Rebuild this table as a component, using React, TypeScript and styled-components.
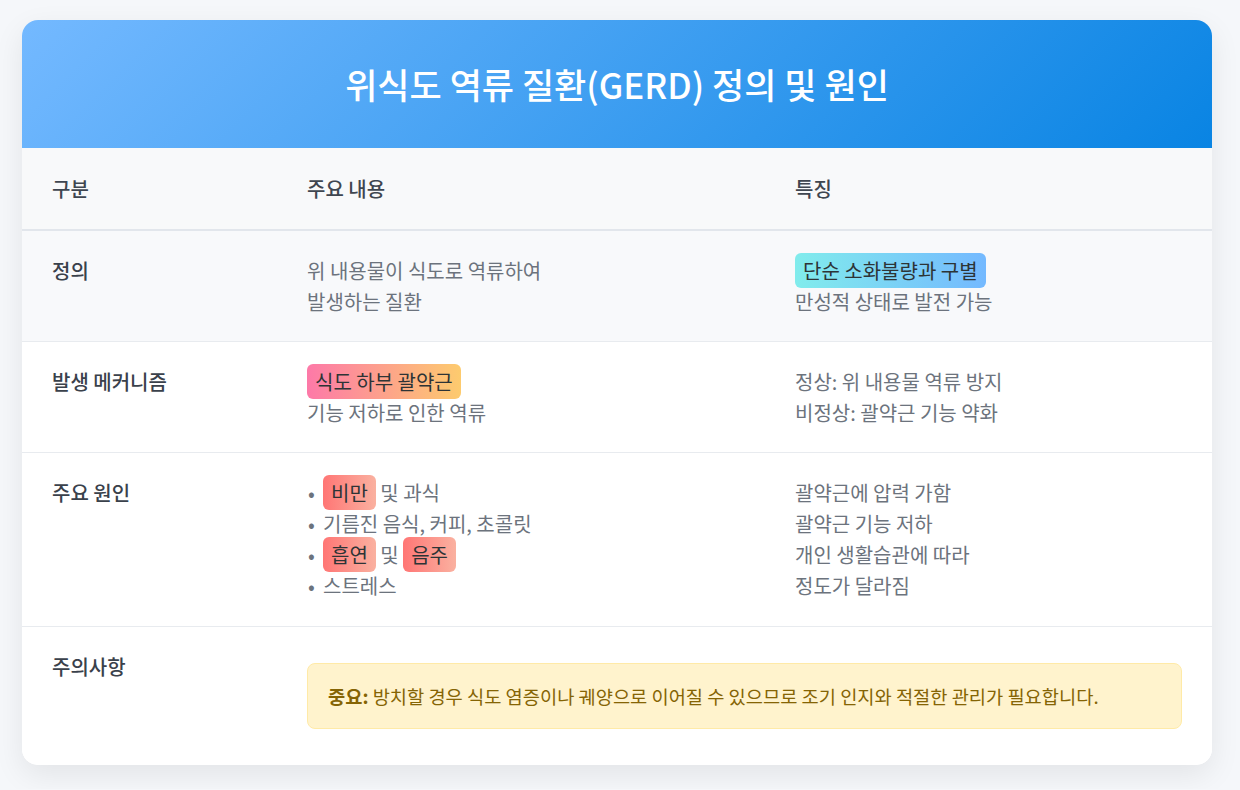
import * as React from 'react';
import styled, { createGlobalStyle } from 'styled-components';

const GlobalStyle = createGlobalStyle`
  * { box-sizing: border-box; }
  body {
    margin: 0;
    padding: 20px 28px 24px 22px;
    background: #f5f7fa;
    font-family: "Noto Sans CJK KR", "Noto Sans", sans-serif;
  }
`;

const Card = styled.div`
  background: #ffffff;
  border-radius: 16px;
  overflow: hidden;
  box-shadow: 0 10px 30px rgba(0, 0, 0, 0.08);
`;

const Header = styled.div`
  background: linear-gradient(135deg, #74b9ff 0%, #0984e3 100%);
  height: 128px;
  display: flex;
  align-items: center;
  justify-content: center;
`;

const Title = styled.h1`
  margin: 0;
  color: #ffffff;
  font-size: 35px;
  font-weight: 500;
  line-height: 1.2;
`;

const Table = styled.table`
  width: 100%;
  border-collapse: collapse;
  table-layout: fixed;
`;

const HeadCell = styled.th`
  text-align: left;
  padding: 25px 30px;
  background: #f8f9fa;
  border-bottom: 2px solid #e2e6ec;
  color: #3f4650;
  font-size: 20px;
  font-weight: 500;
  line-height: 31px;
`;

const Row = styled.tr<{ $shaded?: boolean }>`
  background: ${(p) => (p.$shaded ? '#f8f9fb' : '#ffffff')};
  border-bottom: 1px solid #e8ebef;
  &:last-child { border-bottom: none; }
`;

const LabelCell = styled.td`
  vertical-align: top;
  padding: 24px 30px;
  color: #3a414b;
  font-size: 20px;
  font-weight: 500;
  line-height: 31px;
`;

const Cell = styled.td`
  vertical-align: top;
  padding: 24px 30px;
  color: #6c737d;
  font-size: 20px;
  line-height: 31px;
`;

const Pill = styled.span<{ $tone: 'blue' | 'sunset' | 'coral' }>`
  padding: 3px 8px;
  border-radius: 6px;
  color: #2d3436;
  background: ${(p) =>
    p.$tone === 'blue'
      ? 'linear-gradient(90deg, #81ecec, #74b9ff)'
      : p.$tone === 'sunset'
      ? 'linear-gradient(90deg, #fd79a8, #fdcb6e)'
      : 'linear-gradient(90deg, #ff7675, #fab1a0)'};
`;

const List = styled.ul`
  list-style: none;
  margin: 0;
  padding: 0 0 1px;
`;

const Item = styled.li`
  &::before {
    content: '•';
    display: inline-block;
    width: 15px;
    padding-left: 1px;
    color: #6c737d;
  }
`;

const Notice = styled.div`
  margin: 12px 0;
  padding: 16px 20px;
  background: #fff3cd;
  border: 1px solid #ffeaa7;
  border-radius: 8px;
  color: #856404;
  font-size: 18.7px;
  line-height: 32px;
  strong { font-weight: 700; }
`;

export default function App() {
  return (
    <>
      <GlobalStyle />
      <Card>
        <Header>
          <Title>위식도 역류 질환(GERD) 정의 및 원인</Title>
        </Header>
        <Table>
          <colgroup>
            <col style={{ width: 255 }} />
            <col style={{ width: 488 }} />
            <col />
          </colgroup>
          <thead>
            <tr>
              <HeadCell>구분</HeadCell>
              <HeadCell>주요 내용</HeadCell>
              <HeadCell>특징</HeadCell>
            </tr>
          </thead>
          <tbody>
            <Row $shaded>
              <LabelCell>정의</LabelCell>
              <Cell>
                위 내용물이 식도로 역류하여
                <br />
                발생하는 질환
              </Cell>
              <Cell>
                <Pill $tone="blue">단순 소화불량과 구별</Pill>
                <br />
                만성적 상태로 발전 가능
              </Cell>
            </Row>
            <Row>
              <LabelCell>발생 메커니즘</LabelCell>
              <Cell>
                <Pill $tone="sunset">식도 하부 괄약근</Pill>
                <br />
                기능 저하로 인한 역류
              </Cell>
              <Cell>
                정상: 위 내용물 역류 방지
                <br />
                비정상: 괄약근 기능 약화
              </Cell>
            </Row>
            <Row>
              <LabelCell>주요 원인</LabelCell>
              <Cell>
                <List>
                  <Item>
                    <Pill $tone="coral">비만</Pill> 및 과식
                  </Item>
                  <Item>기름진 음식, 커피, 초콜릿</Item>
                  <Item>
                    <Pill $tone="coral">흡연</Pill> 및 <Pill $tone="coral">음주</Pill>
                  </Item>
                  <Item>스트레스</Item>
                </List>
              </Cell>
              <Cell>
                괄약근에 압력 가함
                <br />
                괄약근 기능 저하
                <br />
                개인 생활습관에 따라
                <br />
                정도가 달라짐
              </Cell>
            </Row>
            <Row>
              <LabelCell>주의사항</LabelCell>
              <Cell colSpan={2}>
                <Notice>
                  <strong>중요:</strong> 방치할 경우 식도 염증이나 궤양으로 이어질 수 있으므로 조기 인지와 적절한 관리가 필요합니다.
                </Notice>
              </Cell>
            </Row>
          </tbody>
        </Table>
      </Card>
    </>
  );
}
